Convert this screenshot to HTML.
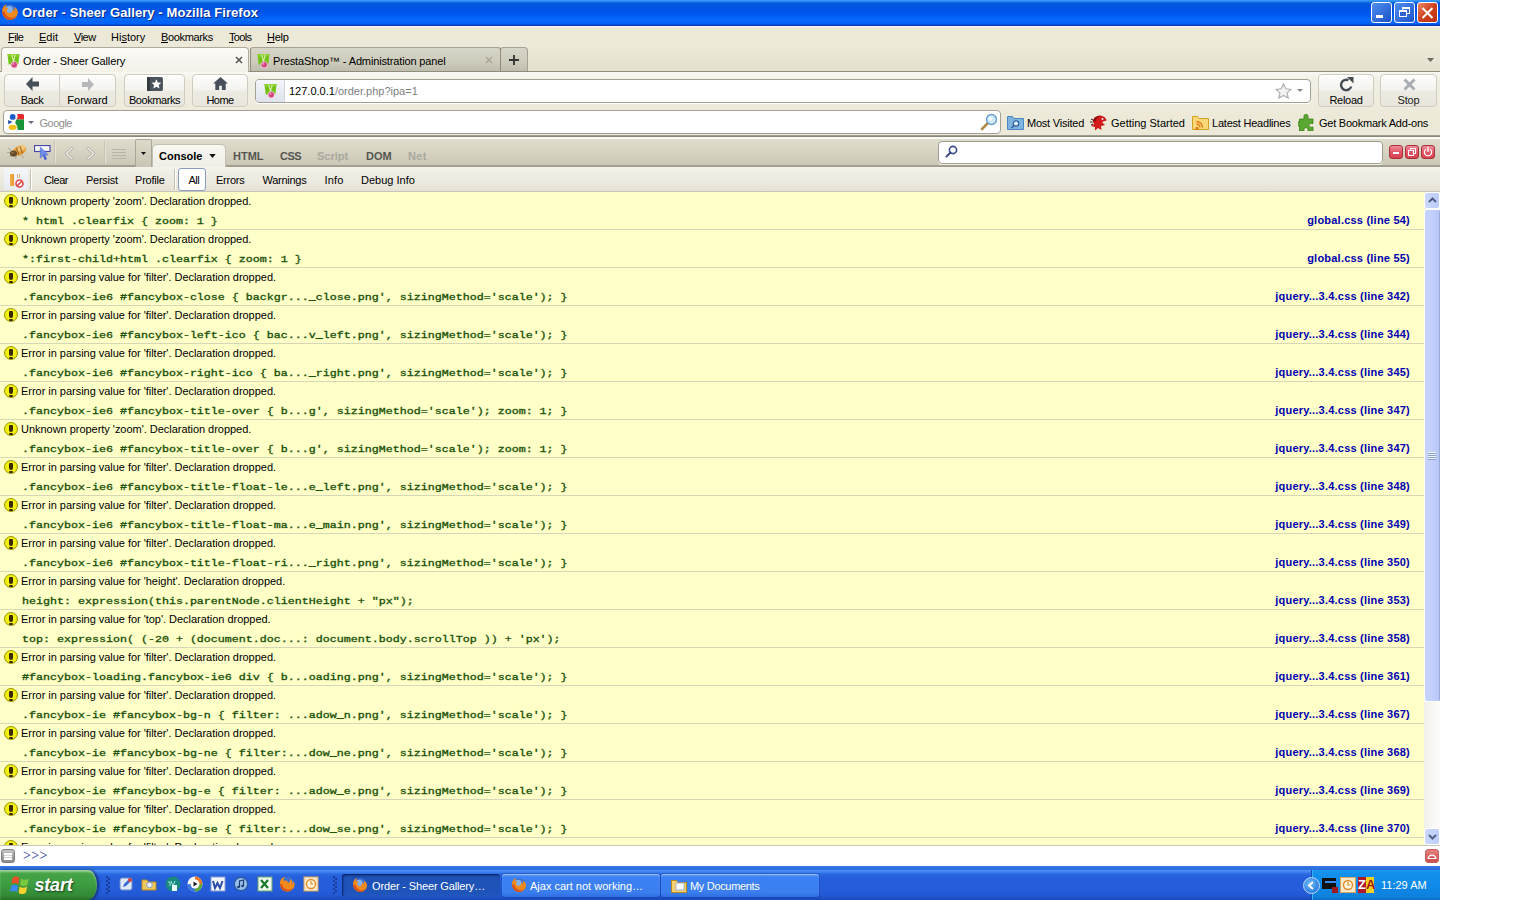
<!DOCTYPE html>
<html>
<head>
<meta charset="utf-8">
<title>Order - Sheer Gallery - Mozilla Firefox</title>
<style>
*{box-sizing:border-box;margin:0;padding:0}
html,body{width:1537px;height:900px;overflow:hidden;background:#fff}
body{font-family:"Liberation Sans",sans-serif;font-size:11px;color:#000;position:relative}
.abs{position:absolute}
#win{position:absolute;left:0;top:0;width:1440px;height:900px;background:#ECE9D8;overflow:hidden}
/* title bar */
#title{left:0;top:0;width:1440px;height:26px;background:linear-gradient(#3c9cfc 0,#2a86f2 1.500px,#0c66e2 2.500px,#0059de 4px,#0054e4 7px,#0055e8 12px,#0059f4 15px,#0468f8 19px,#0064fc 23px,#005cec 24.200px,#0042bc 25px,#002c98 26px)}
#title .txt{left:22px;top:5px;letter-spacing:.09px;font-weight:bold;font-size:13px;color:#fff;text-shadow:1px 1px 0 #0a2a80;white-space:nowrap}
.tb{top:2px;width:21px;height:21px;border:1px solid #fff;border-radius:3px;background:linear-gradient(135deg,#4f8ef0,#1c53c8)}
/* menu */
#menu{left:0;top:26px;width:1440px;height:22px;background:#ECE9D8;border-top:1px solid #f8f8fc}
#menu span{position:absolute;top:4px;font-size:11px;white-space:nowrap}
/* tabs */
#tabs{left:0;top:47px;width:1440px;height:25px;background:linear-gradient(#ECE9D8,#e4e0cf)}
/* nav */
#nav{left:0;top:72px;width:1440px;height:37px;background:linear-gradient(#f8f7f2,#f1efe4 8px,#eeebdd);border-top:1px solid #f8f7f2}
.nbtn{top:1px;height:33px;border:1px solid #d0cdbf;border-radius:4px;background:linear-gradient(#fdfdfc,#f4f3ee 48%,#eceae2 52%,#e8e6dc);box-shadow:0 1px 0 #fff inset}
.nbtn span{position:absolute;left:0;right:0;bottom:0;text-align:center;font-size:11px}
/* bookmarks/search row */
#bm{left:0;top:109px;width:1440px;height:26px;background:linear-gradient(#eeebdc,#ECE9D8 6px)}
/* firebug */
#fbtop{left:0;top:135px;width:1440px;height:32px;background:linear-gradient(#e0ddcd 4px,#cbc8b8 30px);border-bottom:2px solid #a29f8f}
#fbsub{left:0;top:167px;width:1440px;height:25px;background:linear-gradient(#f4f2ea,#e6e3d6);border-bottom:1px solid #c8c5b8}
.ft{top:15px;font-size:11px;font-weight:bold;color:#565650;white-space:nowrap}
.fw{top:10px;width:14px;height:14px;border-radius:3px;background:linear-gradient(#f08c9c,#e05868 50%,#d84050);border:1px solid #a83038}
.st{top:7px;font-size:11px;white-space:nowrap}
#log{left:0;top:192px;width:1424px;height:653px;background:#FFFFC8;overflow:hidden}
.row{position:absolute;left:0;width:1424px;height:38px;border-bottom:1px solid #d7d7b7}
.row .m{position:absolute;left:21px;top:3px;font-size:11px;white-space:nowrap;letter-spacing:-.03px}
.row .c{position:absolute;left:22px;top:24px;font-family:"Liberation Mono",monospace;font-size:11.667px;line-height:14px;font-weight:normal;-webkit-text-stroke:.4px #1c5208;color:#1c5208;white-space:pre;transform:scaleY(.8);transform-origin:0 0}
.row .l{position:absolute;right:14px;top:22px;font-weight:bold;font-size:11px;color:#0000b0;white-space:nowrap;letter-spacing:.22px}
.row .i{position:absolute;left:4px;top:2px;width:14px;height:14px;border-radius:7px;background:radial-gradient(circle at 50% 45%,#fbfb20,#f0ee10 60%,#e0d800);border:1px solid #9a9400}
.row .i:before{content:"";position:absolute;left:4px;top:2px;width:4px;height:7px;background:#3a2a00;border-radius:1px 1px 2px 2px}
.row .i:after{content:"";position:absolute;left:4px;top:9.500px;width:4px;height:2px;background:#3a2a00;border-radius:1px}
#cmd{left:0;top:845px;width:1440px;height:21px;background:#fff;border-top:1px solid #c8c5b8}
.tk{top:6px;width:158px;height:23px;border-radius:3px;background:linear-gradient(#5a98f8,#3c81f3 15%,#3a7ef0 80%,#2f6ee0);box-shadow:inset 0 1px 1px rgba(255,255,255,.4),0 0 0 1px rgba(10,40,140,.25)}
.tt{top:12px;font-size:11px;color:#fff;white-space:nowrap}
#task{left:0;top:866px;width:1440px;height:34px;background:linear-gradient(#3476e2 0,#2e6fde 3px,#2e6ee0 4px,#4a8ef4 4.500px,#3f84f0 6px,#2c68e2 8px,#265fdc 11px,#245cda 24px,#2259d4 29px,#1e50c6 32px,#1a46b4 34px)}
</style>
</head>
<body>
<div id="win">
<div id="title" class="abs">
<svg class="abs" style="left:1px;top:3px" width="18" height="18" viewBox="0 0 18 18"><circle cx="9" cy="9" r="7.5" fill="#3b6fd0"/><circle cx="8" cy="7" r="4" fill="#7fb2f0"/><path d="M1.2 8.5C1 4 4 1.5 6 1.2 4.6 2.6 4.5 4 5 5.2c1-.6 2-.4 2.6.2-1.6.6-2 1.8-1.6 3 .6 1.6 2.6 2 4 1.2 1.6-.9 2-2.6 1.4-4.2 1.2.8 1.8 2 1.8 3.400 .5-1.400 .5-3 0-4.500C16 5.500 17 7.500 16.800 10c-.4 4-3.800 6.800-7.800 6.800-4.300 0-7.600-3.600-7.800-8.300z" fill="#f08a1c"/><path d="M1.2 8.500C1.500 13 5 16.800 9 16.800c3 0 5.500-1.600 6.800-4-1.500 1.700-4 2.500-6.500 2-3.300-.6-5.300-3.300-5.600-6.300z" fill="#d8501a"/></svg>
<div class="abs txt">Order - Sheer Gallery - Mozilla Firefox</div>
<div class="abs tb" style="left:1371px"><i class="abs" style="left:4px;top:12px;width:7px;height:3px;background:#fff"></i></div>
<div class="abs tb" style="left:1394px"><i class="abs" style="left:7px;top:4px;width:8px;height:7px;border:1px solid #fff;border-top-width:2px"></i><i class="abs" style="left:4px;top:7px;width:8px;height:7px;border:1px solid #fff;border-top-width:2px;background:#2f62d0"></i></div>
<div class="abs tb" style="left:1417px;background:linear-gradient(135deg,#ec8a6a,#d1401c 50%,#b8300f)"><svg class="abs" style="left:3px;top:4px" width="13" height="12" viewBox="0 0 13 12"><path d="M1.500 1l10 10M11.500 1l-10 10" stroke="#fff" stroke-width="2"/></svg></div>
</div>
<div id="menu" class="abs"><span style="left:8px;letter-spacing:-.6px"><u>F</u>ile</span><span style="left:39px"><u>E</u>dit</span><span style="left:74px;letter-spacing:-.5px"><u>V</u>iew</span><span style="left:111px">Hi<u>s</u>tory</span><span style="left:161px;letter-spacing:-.35px"><u>B</u>ookmarks</span><span style="left:229px;letter-spacing:-.7px"><u>T</u>ools</span><span style="left:267px;letter-spacing:-.25px"><u>H</u>elp</span></div>
<div id="tabs" class="abs">
<div class="abs" style="left:0;top:24px;width:1440px;height:1px;background:#8f8c7c"></div>
<div class="abs" style="left:250px;top:0;width:251px;height:24px;border:1px solid #8f8c7c;border-top-color:#a5a294;border-bottom:0;border-radius:3px 3px 0 0;background:linear-gradient(#d6d5c7,#cccbbc 60%,#bfbeae)"></div>
<div class="abs" style="left:500px;top:0;width:28px;height:24px;border:1px solid #8f8c7c;border-top-color:#a5a294;border-right-color:#a5a294;border-bottom:0;border-radius:3px 4px 0 0;background:linear-gradient(#d6d5c7,#cccbbc 60%,#bfbeae)"></div>
<div class="abs" style="left:1px;top:0;width:248px;height:25px;border:1px solid #aeab9c;border-bottom:0;border-radius:4px 4px 0 0;background:linear-gradient(#fbfaf7,#f3f1e8)"></div>
<svg class="abs" style="left:7px;top:6px" width="13" height="16" viewBox="0 0 13 16"><path d="M.5 1h12l-1.200 10.500H1.700z" fill="#74c214"/><path d="M.5 1h12l-.3 2.500H.8z" fill="#8ad030"/><path d="M5 1.500c0 3 .8 4.500 1.500 6.500C7.200 6 8 4.500 8 1.500" fill="none" stroke="#d8f0b0" stroke-width="1.100"/><circle cx="7.200" cy="11.800" r="3.600" fill="#f4c8dc"/><circle cx="7.200" cy="11.800" r="2.700" fill="#d2447e"/><circle cx="6.400" cy="10.800" r="1" fill="#f0a8c8"/></svg>
<div class="abs" style="left:23px;top:8px;font-size:11px;white-space:nowrap;letter-spacing:-.15px">Order - Sheer Gallery</div>
<svg class="abs" style="left:235px;top:9px" width="8" height="8" viewBox="0 0 8 8"><path d="M1 1l6 6M7 1l-6 6" stroke="#5a5a55" stroke-width="1.600"/></svg>
<svg class="abs" style="left:257px;top:6px" width="13" height="16" viewBox="0 0 13 16"><path d="M.5 1h12l-1.200 10.500H1.700z" fill="#74c214"/><path d="M.5 1h12l-.3 2.500H.8z" fill="#8ad030"/><path d="M5 1.500c0 3 .8 4.500 1.500 6.500C7.200 6 8 4.500 8 1.500" fill="none" stroke="#d8f0b0" stroke-width="1.100"/><circle cx="7.200" cy="11.800" r="3.600" fill="#f4c8dc"/><circle cx="7.200" cy="11.800" r="2.700" fill="#d2447e"/><circle cx="6.400" cy="10.800" r="1" fill="#f0a8c8"/></svg>
<div class="abs" style="left:273px;top:8px;font-size:11px;white-space:nowrap;letter-spacing:-.14px">PrestaShop&trade; - Administration panel</div>
<svg class="abs" style="left:485px;top:9px" width="8" height="8" viewBox="0 0 8 8"><path d="M1 1l6 6M7 1l-6 6" stroke="#a9a698" stroke-width="1.600"/></svg>
<svg class="abs" style="left:509px;top:8px" width="10" height="10" viewBox="0 0 11 11"><path d="M5.500 0v11M0 5.500h11" stroke="#333" stroke-width="2"/></svg>
<svg class="abs" style="left:1427px;top:11px" width="7" height="4" viewBox="0 0 7 4"><path d="M0 0h7L3.500 4z" fill="#6a6a60"/></svg>
</div>
<div id="nav" class="abs">
<div class="abs nbtn" style="left:4px;width:56px;border-radius:4px 0 0 4px"><svg class="abs" style="left:21px;top:2px" width="13" height="14" viewBox="0 0 13 14"><path d="M6.500 0L0 7l6.500 7V9.500H13v-5H6.500z" fill="#47505a"/></svg><span style="letter-spacing:-.5px">Back</span></div>
<div class="abs nbtn" style="left:59px;width:57px;border-radius:0 4px 4px 0"><svg class="abs" style="left:22px;top:3px" width="12" height="13" viewBox="0 0 12 13"><path d="M6 0l6 6.500L6 13V9H0V4h6z" fill="#b6b8ba"/></svg><span>Forward</span></div>
<div class="abs nbtn" style="left:124px;width:61px"><svg class="abs" style="left:22px;top:2px" width="16" height="14" viewBox="0 0 17 15"><rect x="0" y="0" width="17" height="15" rx="2" fill="#4a525a"/><rect x="0" y="0" width="3" height="15" fill="#343a40"/><path d="M10 2.500l1.600 3.300 3.600.4-2.700 2.400.8 3.600L10 10.400 6.700 12.200l.8-3.600L4.800 6.200l3.600-.4z" fill="#fff"/></svg><span style="letter-spacing:-.44px">Bookmarks</span></div>
<div class="abs nbtn" style="left:192px;width:56px"><svg class="abs" style="left:20px;top:2px" width="15" height="13" viewBox="0 0 17 15"><path d="M8.500 0L0 7.500h2.500V15h4.500v-5h3v5h4.500V7.500H17z" fill="#47505a"/></svg><span style="letter-spacing:-.6px">Home</span></div>
<div class="abs" style="left:255px;top:6px;width:1056px;height:24px;border:1px solid #a3a195;border-radius:4px;background:#fff;box-shadow:0 1px 0 #fff"></div>
<div class="abs" style="left:256px;top:7px;width:29px;height:22px;border-radius:3px 0 0 3px;background:linear-gradient(#f4f6fa,#dde2ec);border-right:1px solid #d0d4dc"></div>
<svg class="abs" style="left:264px;top:10px" width="13" height="16" viewBox="0 0 13 16"><path d="M.5 1h12l-1.200 10.500H1.700z" fill="#74c214"/><path d="M.5 1h12l-.3 2.500H.8z" fill="#8ad030"/><path d="M5 1.500c0 3 .8 4.500 1.500 6.500C7.200 6 8 4.500 8 1.500" fill="none" stroke="#d8f0b0" stroke-width="1.100"/><circle cx="7.200" cy="11.800" r="3.600" fill="#f4c8dc"/><circle cx="7.200" cy="11.800" r="2.700" fill="#d2447e"/><circle cx="6.400" cy="10.800" r="1" fill="#f0a8c8"/></svg>
<div class="abs" style="left:289px;top:12px;font-size:11px;white-space:nowrap">127.0.0.1<span style="color:#808080">/order.php?ipa=1</span></div>
<svg class="abs" style="left:1275px;top:9.500px" width="17" height="16" viewBox="0 0 17 16"><path d="M8.500 1l2.300 4.800 5.200.6-3.900 3.500 1.100 5.100-4.700-2.600-4.700 2.600 1.100-5.100L1 6.400l5.200-.6z" fill="#f2f2f2" stroke="#b0b0b0" stroke-width="1.200"/></svg>
<svg class="abs" style="left:1297px;top:16px" width="6" height="3" viewBox="0 0 6 3"><path d="M0 0h6L3 3z" fill="#8a8a8a"/></svg>
<div class="abs nbtn" style="left:1318px;width:56px"><svg class="abs" style="left:20px;top:2px" width="15" height="15" viewBox="0 0 15 15"><path d="M12.200 9.500A5.200 5.200 0 1 1 9.500 3.200" fill="none" stroke="#454c54" stroke-width="2.400"/><path d="M8 0h6.500v6.500z" fill="#454c54"/></svg><span style="letter-spacing:-.3px">Reload</span></div>
<div class="abs nbtn" style="left:1380px;width:57px"><svg class="abs" style="left:22px;top:3px" width="13" height="13" viewBox="0 0 13 13"><path d="M1.500 1.500l10 10M11.500 1.500l-10 10" stroke="#a9acb0" stroke-width="3"/></svg><span style="color:#222;letter-spacing:-.2px">Stop</span></div>
</div>
<div id="bm" class="abs">
<div class="abs" style="left:3px;top:1px;width:998px;height:24px;border:1px solid #a3a195;border-radius:4px;background:#fff"></div>
<svg class="abs" style="left:8px;top:5px" width="16" height="16" viewBox="0 0 16 16"><path d="M9 0h5.500Q16 0 16 1.500V5.500H8.500Q10.500 2.500 9 0z" fill="#e8282a"/><path d="M8.500 5.500H16V16H9.500Q10 12 7.400 9.500Q7 7 8.500 5.500z" fill="#18953a"/><circle cx="4.700" cy="2.900" r="2.900" fill="#1c5acc"/><path d="M.2 6l4.200 2.100L.2 10.300z" fill="#1c4aa8"/><ellipse cx="4.700" cy="13.300" rx="4" ry="2.600" fill="#f0c018"/></svg>
<svg class="abs" style="left:28px;top:12px" width="6" height="3" viewBox="0 0 6 3"><path d="M0 0h6L3 3z" fill="#6a6880"/></svg>
<div class="abs" style="left:39.500px;top:8px;font-size:11px;color:#8e8e8e;letter-spacing:-.5px">Google</div>
<svg class="abs" style="left:980px;top:4px" width="18" height="18" viewBox="0 0 18 18"><path d="M2 16l6-6" stroke="#b08a4a" stroke-width="2.600" stroke-linecap="round"/><circle cx="11.500" cy="6.500" r="5" fill="#cfe8fa" stroke="#6a9ccc" stroke-width="1.400"/><circle cx="10.500" cy="5.500" r="2" fill="#f4fbff"/></svg>
<svg class="abs" style="left:1007px;top:6px" width="17" height="15" viewBox="0 0 17 15"><path d="M.5 1.500h5l1.500 2h9.500v11H.5z" fill="#7fb3e0" stroke="#4a86c0"/><circle cx="9" cy="8.500" r="2.700" fill="#e8f4ff" stroke="#2a5f9a" stroke-width="1.200"/><path d="M7 10.500l-2.500 2.500" stroke="#2a5f9a" stroke-width="1.500"/></svg>
<div class="abs" style="left:1027px;top:8px;font-size:11px;white-space:nowrap;letter-spacing:-.22px">Most Visited</div>
<svg class="abs" style="left:1090px;top:5px" width="17" height="17" viewBox="0 0 17 17"><path d="M3 8C3 3 8 1 12 2c3 .8 4.500 3 4.500 4.500L12 8l3 3-4 1 .5 4-3.500-2-3 2.500V13L1 12l3-2z" fill="#d41a1a"/><path d="M3 8C3 3 8 1 12 2c-3 0-6 2-6 5z" fill="#8a0c0c"/><circle cx="12.500" cy="5" r="1" fill="#fff"/><path d="M1 5l2 1M0 8h2.500M1 11l2-1" stroke="#222" stroke-width="1"/></svg>
<div class="abs" style="left:1111px;top:8px;font-size:11px;white-space:nowrap">Getting Started</div>
<svg class="abs" style="left:1192px;top:6px" width="17" height="15" viewBox="0 0 17 15"><path d="M.5 1.500h5l1.500 2h9.500v11H.5z" fill="#f8d878" stroke="#d4a020"/><path d="M5 12.500a1 1 0 1 0 .01 0M4.500 9a3.500 3.500 0 0 1 3.500 3.500M4.500 6.500a6 6 0 0 1 6 6" fill="none" stroke="#e07818" stroke-width="1.300"/></svg>
<div class="abs" style="left:1212px;top:8px;font-size:11px;white-space:nowrap;letter-spacing:-.22px">Latest Headlines</div>
<svg class="abs" style="left:1298px;top:4px" width="17" height="18" viewBox="0 0 17 18"><path d="M6 4.500a2.200 2.200 0 1 1 4 0V6h5v4.500h-1a2 2 0 1 0 0 3.500h1V18H10v-1.500a2 2 0 1 0-4 0V18H1.500v-5H0a2.200 2.200 0 1 1 1.500-3.500V6H6z" fill="#5aa832" stroke="#3a8018" stroke-width=".8"/></svg>
<div class="abs" style="left:1319px;top:8px;font-size:11px;white-space:nowrap;letter-spacing:-.23px">Get Bookmark Add-ons</div>
</div>
<div id="fbtop" class="abs">
<div class="abs" style="left:0;top:0;width:1440px;height:1px;background:#a09e8e"></div><div class="abs" style="left:0;top:1px;width:1440px;height:1px;background:#8a8878"></div><div class="abs" style="left:0;top:2px;width:1440px;height:2px;background:#fbfaf6"></div>
<svg class="abs" style="left:7px;top:8px;opacity:.9" width="21" height="18" viewBox="0 0 21 18"><path d="M1 5l6 4M2 14l6-4M19 5l-5 3M17 15l-4-4M0 9.500h5M8 16l2-4" stroke="#9a8a6a" stroke-width=".9" opacity=".7"/><ellipse cx="12.500" cy="7.500" rx="7" ry="4.600" fill="#ee9a2a" transform="rotate(-24 12.500 7.500)"/><ellipse cx="14" cy="5.500" rx="4.500" ry="2.400" fill="#f8c870" transform="rotate(-24 14 5.500)"/><path d="M9.500 5l2.500 7M13 3.500l2.500 7" stroke="#8a5218" stroke-width="1.300" opacity=".8"/><ellipse cx="6.500" cy="10.500" rx="3.600" ry="3.100" fill="#5a3c1c"/><ellipse cx="5.500" cy="9.500" rx="1.500" ry="1" fill="#8a6840"/></svg>
<svg class="abs" style="left:34px;top:10px" width="17" height="16" viewBox="0 0 17 16"><rect x=".5" y=".5" width="15.500" height="6" fill="#f4f4fc" stroke="#4a4aa4" stroke-width="1.200"/><path d="M6.300 2v11.200l2.600-2.600 2 4.200 1.800-.9-2-4h3.600z" fill="#6f8eea" stroke="#4a5cc8" stroke-width=".5"/><path d="M9 9l1.900 5.800 1.800-.9-2-4z" fill="#4a58d4"/></svg>
<div class="abs" style="left:54px;top:6px;width:1px;height:22px;background:#c6c3b3"></div><div class="abs" style="left:55px;top:6px;width:1px;height:22px;background:#e6e3d6"></div>
<svg class="abs" style="left:63px;top:11px" width="11" height="15" viewBox="0 0 11 15"><path d="M8.500 1L2 7.500 8.500 14l1.500-1.500-5-5 5-5z" fill="#f4f3ee" stroke="#a8a598" stroke-width="1"/></svg>
<svg class="abs" style="left:86px;top:11px" width="11" height="15" viewBox="0 0 11 15"><path d="M2.500 1L9 7.500 2.500 14 1 12.500l5-5-5-5z" fill="#f4f3ee" stroke="#a8a598" stroke-width="1"/></svg>
<div class="abs" style="left:104px;top:6px;width:1px;height:22px;background:#c6c3b3"></div><div class="abs" style="left:105px;top:6px;width:1px;height:22px;background:#e6e3d6"></div>
<svg class="abs" style="left:112px;top:13px" width="14" height="12" viewBox="0 0 14 12"><path d="M0 1.500h14M0 4.500h14M0 7.500h14M0 10.500h14" stroke="#b8b5a8" stroke-width="1"/></svg>
<div class="abs" style="left:135px;top:4px;width:17px;height:28px;border:1px solid #a9a698;border-bottom:0;border-radius:2px 2px 0 0;background:linear-gradient(#dedac9,#c9c5b4)"></div>
<svg class="abs" style="left:141px;top:17px" width="5" height="3" viewBox="0 0 5 3"><path d="M0 0h5L2.500 3z" fill="#111"/></svg>
<div class="abs" style="left:152px;top:9px;width:74px;height:24px;border:1px solid #c4c1b3;border-bottom:0;border-radius:5px 5px 0 0;background:linear-gradient(#f8f7f2,#efede4)"></div>
<div class="abs" style="left:159px;top:15px;font-size:11px;font-weight:bold;white-space:nowrap">Console</div>
<svg class="abs" style="left:209px;top:19px" width="7" height="4" viewBox="0 0 8 5"><path d="M0 0h8L4 5z" fill="#111"/></svg>
<div class="abs ft" style="left:233px">HTML</div>
<div class="abs ft" style="left:280px;letter-spacing:-.5px">CSS</div>
<div class="abs ft" style="left:317px;color:#aaa89c">Script</div>
<div class="abs ft" style="left:366px">DOM</div>
<div class="abs ft" style="left:408px;color:#aaa89c;letter-spacing:.3px">Net</div>
<div class="abs" style="left:938px;top:6px;width:445px;height:23px;border:1px solid #a09d90;border-radius:4px;background:#fff;box-shadow:0 1px 0 #f4f2ea"></div>
<svg class="abs" style="left:945px;top:10px" width="13" height="13" viewBox="0 0 13 13"><circle cx="8" cy="5" r="3.600" fill="#fff" stroke="#3a4a8a" stroke-width="1.600"/><path d="M5.500 7.500L1.500 11.500" stroke="#3a4a8a" stroke-width="2" stroke-linecap="round"/></svg>
<div class="abs fw" style="left:1389px"><i class="abs" style="left:3px;top:6px;width:6px;height:2px;background:#fff"></i></div>
<div class="abs fw" style="left:1405px"><i class="abs" style="left:4px;top:2px;width:6px;height:6px;border:1px solid #fff"></i><i class="abs" style="left:2px;top:4px;width:6px;height:6px;border:1px solid #fff;background:#d85868"></i></div>
<div class="abs fw" style="left:1421px"><svg class="abs" style="left:1px;top:1px" width="10" height="10" viewBox="0 0 10 10"><path d="M3 2.200A3.600 3.600 0 1 0 7 2.200" fill="none" stroke="#fff" stroke-width="1.300"/><path d="M5 0v5" stroke="#fff" stroke-width="1.300"/></svg></div>
</div>
<div id="fbsub" class="abs">
<div class="abs" style="left:4px;top:1px;width:24px;height:22px;background:linear-gradient(#f4f7fb,#e8edf4);border-radius:3px"></div>
<div class="abs" style="left:10px;top:7px;width:4px;height:12px;background:linear-gradient(90deg,#f0b050,#e89a2c)"></div>
<div class="abs" style="left:17px;top:7px;width:1px;height:4px;background:#d8b070"></div><div class="abs" style="left:19px;top:7px;width:1px;height:4px;background:#d8b070"></div>
<svg class="abs" style="left:15px;top:12px" width="9" height="9" viewBox="0 0 9 9"><circle cx="4.500" cy="4.500" r="3.500" fill="#fff" stroke="#e04848" stroke-width="1.600"/><path d="M2 7L7 2" stroke="#e04848" stroke-width="1.600"/></svg>
<div class="abs" style="left:30px;top:2px;width:1px;height:21px;background:#c4c1b3"></div><div class="abs" style="left:31px;top:2px;width:1px;height:21px;background:#fff"></div>
<div class="abs st" style="left:44px;letter-spacing:-.46px">Clear</div><div class="abs st" style="left:86px;letter-spacing:-.27px">Persist</div><div class="abs st" style="left:135px;letter-spacing:-.2px">Profile</div>
<div class="abs" style="left:174px;top:2px;width:1px;height:21px;background:#c4c1b3"></div><div class="abs" style="left:175px;top:2px;width:1px;height:21px;background:#fff"></div>
<div class="abs" style="left:178px;top:1px;width:28px;height:23px;border:1px solid #8a9cc0;border-radius:3px;background:#fff"></div>
<div class="abs st" style="left:188.500px;letter-spacing:-.5px">All</div><div class="abs st" style="left:216px;letter-spacing:-.25px">Errors</div><div class="abs st" style="left:262.500px;letter-spacing:-.26px">Warnings</div><div class="abs st" style="left:324.500px;letter-spacing:.15px">Info</div><div class="abs st" style="left:361px">Debug Info</div>
</div>
<div id="log" class="abs">
<div class="row" style="top:0px"><div class="i"></div><div class="m">Unknown property 'zoom'. Declaration dropped.</div><div class="c">* html .clearfix { zoom: 1 }</div><div class="l">global.css (line 54)</div></div>
<div class="row" style="top:38px"><div class="i"></div><div class="m">Unknown property 'zoom'. Declaration dropped.</div><div class="c">*:first-child+html .clearfix { zoom: 1 }</div><div class="l">global.css (line 55)</div></div>
<div class="row" style="top:76px"><div class="i"></div><div class="m">Error in parsing value for 'filter'. Declaration dropped.</div><div class="c">.fancybox-ie6 #fancybox-close { backgr..._close.png', sizingMethod='scale'); }</div><div class="l">jquery...3.4.css (line 342)</div></div>
<div class="row" style="top:114px"><div class="i"></div><div class="m">Error in parsing value for 'filter'. Declaration dropped.</div><div class="c">.fancybox-ie6 #fancybox-left-ico { bac...v_left.png', sizingMethod='scale'); }</div><div class="l">jquery...3.4.css (line 344)</div></div>
<div class="row" style="top:152px"><div class="i"></div><div class="m">Error in parsing value for 'filter'. Declaration dropped.</div><div class="c">.fancybox-ie6 #fancybox-right-ico { ba..._right.png', sizingMethod='scale'); }</div><div class="l">jquery...3.4.css (line 345)</div></div>
<div class="row" style="top:190px"><div class="i"></div><div class="m">Error in parsing value for 'filter'. Declaration dropped.</div><div class="c">.fancybox-ie6 #fancybox-title-over { b...g', sizingMethod='scale'); zoom: 1; }</div><div class="l">jquery...3.4.css (line 347)</div></div>
<div class="row" style="top:228px"><div class="i"></div><div class="m">Unknown property 'zoom'. Declaration dropped.</div><div class="c">.fancybox-ie6 #fancybox-title-over { b...g', sizingMethod='scale'); zoom: 1; }</div><div class="l">jquery...3.4.css (line 347)</div></div>
<div class="row" style="top:266px"><div class="i"></div><div class="m">Error in parsing value for 'filter'. Declaration dropped.</div><div class="c">.fancybox-ie6 #fancybox-title-float-le...e_left.png', sizingMethod='scale'); }</div><div class="l">jquery...3.4.css (line 348)</div></div>
<div class="row" style="top:304px"><div class="i"></div><div class="m">Error in parsing value for 'filter'. Declaration dropped.</div><div class="c">.fancybox-ie6 #fancybox-title-float-ma...e_main.png', sizingMethod='scale'); }</div><div class="l">jquery...3.4.css (line 349)</div></div>
<div class="row" style="top:342px"><div class="i"></div><div class="m">Error in parsing value for 'filter'. Declaration dropped.</div><div class="c">.fancybox-ie6 #fancybox-title-float-ri..._right.png', sizingMethod='scale'); }</div><div class="l">jquery...3.4.css (line 350)</div></div>
<div class="row" style="top:380px"><div class="i"></div><div class="m">Error in parsing value for 'height'. Declaration dropped.</div><div class="c">height: expression(this.parentNode.clientHeight + "px");</div><div class="l">jquery...3.4.css (line 353)</div></div>
<div class="row" style="top:418px"><div class="i"></div><div class="m">Error in parsing value for 'top'. Declaration dropped.</div><div class="c">top: expression( (-20 + (document.doc...: document.body.scrollTop )) + 'px');</div><div class="l">jquery...3.4.css (line 358)</div></div>
<div class="row" style="top:456px"><div class="i"></div><div class="m">Error in parsing value for 'filter'. Declaration dropped.</div><div class="c">#fancybox-loading.fancybox-ie6 div { b...oading.png', sizingMethod='scale'); }</div><div class="l">jquery...3.4.css (line 361)</div></div>
<div class="row" style="top:494px"><div class="i"></div><div class="m">Error in parsing value for 'filter'. Declaration dropped.</div><div class="c">.fancybox-ie #fancybox-bg-n { filter: ...adow_n.png', sizingMethod='scale'); }</div><div class="l">jquery...3.4.css (line 367)</div></div>
<div class="row" style="top:532px"><div class="i"></div><div class="m">Error in parsing value for 'filter'. Declaration dropped.</div><div class="c">.fancybox-ie #fancybox-bg-ne { filter:...dow_ne.png', sizingMethod='scale'); }</div><div class="l">jquery...3.4.css (line 368)</div></div>
<div class="row" style="top:570px"><div class="i"></div><div class="m">Error in parsing value for 'filter'. Declaration dropped.</div><div class="c">.fancybox-ie #fancybox-bg-e { filter: ...adow_e.png', sizingMethod='scale'); }</div><div class="l">jquery...3.4.css (line 369)</div></div>
<div class="row" style="top:608px"><div class="i"></div><div class="m">Error in parsing value for 'filter'. Declaration dropped.</div><div class="c">.fancybox-ie #fancybox-bg-se { filter:...dow_se.png', sizingMethod='scale'); }</div><div class="l">jquery...3.4.css (line 370)</div></div>
<div class="row" style="top:646px"><div class="i"></div><div class="m">Error in parsing value for 'filter'. Declaration dropped.</div><div class="c"></div><div class="l"></div></div>
</div>
<div class="abs" id="sb" style="left:1424px;top:192px;width:16px;height:653px;background:linear-gradient(90deg,#f1f0ea,#fdfdfb)">
<div class="abs" style="left:0;top:0;width:16px;height:17px;border:1px solid #fff;border-radius:3px;background:linear-gradient(90deg,#cdd9fc,#bccbf9)"><svg class="abs" style="left:2.500px;top:4px" width="9" height="6" viewBox="0 0 9 6"><path d="M1 5l3.500-3.500L8 5" stroke="#4d6185" stroke-width="2" fill="none"/></svg></div>
<div class="abs" style="left:0;top:17px;width:16px;height:493px;border:1px solid #fff;border-right-color:#9cabd4;border-radius:3px;background:linear-gradient(90deg,#c8d4fc,#c2d0fb 50%,#b6c6f8)"><i class="abs" style="left:3px;top:242px;width:8px;height:1px;background:#eef4fe;box-shadow:0 1px 0 #8c9fd0,0 2px 0 #eef4fe,0 3px 0 #8c9fd0,0 4px 0 #eef4fe,0 5px 0 #8c9fd0,0 6px 0 #eef4fe,0 7px 0 #8c9fd0"></i></div>
<div class="abs" style="left:0;top:636px;width:16px;height:17px;border:1px solid #fff;border-radius:3px;background:linear-gradient(90deg,#cdd9fc,#bccbf9)"><svg class="abs" style="left:2.500px;top:5px" width="9" height="6" viewBox="0 0 9 6"><path d="M1 1l3.500 3.500L8 1" stroke="#4d6185" stroke-width="2" fill="none"/></svg></div>
</div>
<div id="cmd" class="abs">
<div class="abs" style="left:1px;top:3px;width:14px;height:14px;border:1px solid #7c7c7c;border-radius:3px;background:linear-gradient(#c8c8c8,#a4a4a4 50%,#8e8e8e)"><i class="abs" style="left:2px;top:3px;width:8px;height:1.500px;background:#fff;box-shadow:0 2.500px 0 #fff,0 5px 0 #fff"></i></div>
<div class="abs" style="left:23px;top:2px;font-family:'Liberation Serif',serif;font-size:14px;color:#1616a0;letter-spacing:.3px">&gt;&gt;&gt;</div>
<div class="abs" style="left:1425px;top:3px;width:14px;height:14px;border-radius:3px;background:linear-gradient(#e48080,#cc4c4c);border:1px solid #c46060"><svg class="abs" style="left:1px;top:3px" width="10" height="6" viewBox="0 0 10 6"><path d="M1 5.500C2 1 8 1 9 5.500z" fill="none" stroke="#fff" stroke-width="1.200"/></svg></div>
</div>
<div id="task" class="abs"><div class="abs" style="left:0;top:2px;width:1440px;height:32px">
<div class="abs" style="left:0;top:2px;width:97px;height:30px;border-radius:0 9px 9px 0/0 15px 15px 0;background:linear-gradient(#6cba66 0,#46a446 12%,#3c9c40 50%,#338a36 85%,#287028 100%);box-shadow:2px 0 3px rgba(0,0,30,.5),inset 0 2px 2px rgba(255,255,255,.35)"></div>
<svg class="abs" style="left:10px;top:7px" width="20" height="19" viewBox="0 0 17 16.500"><path d="M2 2.500c2-1.500 4-1.500 6 0L7 8C5 6.500 3 6.500 1 8z" fill="#e8502a"/><path d="M9.500 3c2 1.500 4 1.500 6.500 0L15 8.500c-2.500 1.500-4.500 1.500-6.500 0z" fill="#7ac840"/><path d="M.8 9.500c2-1.500 4-1.500 6 0L5.800 15c-2-1.500-4-1.500-6 0z" fill="#3a8af0"/><path d="M8.200 10c2 1.500 4 1.500 6.500 0L13.700 15.500c-2.500 1.500-4.500 1.500-6.500 0z" fill="#f8d030"/></svg>
<div class="abs" style="left:34.500px;top:6.500px;font-size:18px;font-weight:bold;font-style:italic;color:#fff;text-shadow:1px 1px 2px #1a401a;letter-spacing:-.2px">start</div>
<div class="abs" style="left:106px;top:8px;width:2px;height:2px;background:#1a3c9a;box-shadow:0 4px 0 #1a3c9a,0 8px 0 #1a3c9a,0 12px 0 #1a3c9a,0 16px 0 #1a3c9a,2px 2px 0 #1a3c9a,2px 6px 0 #1a3c9a,2px 10px 0 #1a3c9a,2px 14px 0 #1a3c9a"></div><svg class="abs" style="left:118px;top:8px" width="16" height="16" viewBox="0 0 16 16"><rect x="2" y="2" width="12" height="12" rx="2" fill="#dfeaf8" stroke="#6a8ac8"/><path d="M5 11l1-3 4-4 2 2-4 4z" fill="#3a6ad0"/><circle cx="12" cy="4" r="2" fill="#d04040"/></svg><svg class="abs" style="left:141px;top:8px" width="16" height="16" viewBox="0 0 16 16"><path d="M1 4h5l1.500 2H15v8H1z" fill="#f0c860" stroke="#b88a20"/><circle cx="8.500" cy="9" r="2.800" fill="#e8f0f8" stroke="#8aa0c0"/></svg><svg class="abs" style="left:165px;top:8px" width="16" height="16" viewBox="0 0 16 16"><circle cx="8" cy="8" r="7.500" fill="#1a8a80"/><path d="M3 6h2v4M6 5l2 5 2-5" stroke="#9fe8d8" fill="none" stroke-width="1"/><rect x="7" y="9" width="5" height="6" fill="#e8fff8"/></svg><svg class="abs" style="left:187px;top:8px" width="16" height="16" viewBox="0 0 16 16"><circle cx="8" cy="8" r="7.500" fill="#f4f4f4"/><path d="M8 .5a7.500 7.500 0 0 1 7.500 7.500H8z" fill="#e87828"/><path d="M15.500 8A7.500 7.500 0 0 1 8 15.500V8z" fill="#5aa838"/><path d="M8 15.500A7.500 7.500 0 0 1 .5 8H8z" fill="#3a78d8"/><circle cx="8" cy="8" r="4.500" fill="#fff"/><path d="M6.500 5.500l4 2.500-4 2.500z" fill="#222"/></svg><svg class="abs" style="left:210px;top:8px" width="16" height="16" viewBox="0 0 16 16"><rect x="1" y="1" width="14" height="14" fill="#f4f6fc" stroke="#8aa0d0"/><path d="M3 5l2 7 2.500-5 2.500 5 2.500-7" stroke="#2a4aa8" stroke-width="2" fill="none"/></svg><svg class="abs" style="left:233px;top:8px" width="16" height="16" viewBox="0 0 16 16"><circle cx="8" cy="8" r="7.500" fill="#2a5aa8"/><circle cx="8" cy="8" r="6" fill="#9ac0e8"/><path d="M6.500 11V5l4-1v6" stroke="#1a3a78" stroke-width="1.200" fill="none"/><circle cx="5.500" cy="11" r="1.300" fill="#1a3a78"/><circle cx="9.500" cy="10" r="1.300" fill="#1a3a78"/></svg><svg class="abs" style="left:257px;top:8px" width="16" height="16" viewBox="0 0 16 16"><rect x="1" y="1" width="14" height="14" fill="#eef8ee" stroke="#6aa86a"/><path d="M4 4l7 8M11 4l-7 8" stroke="#1a7a2a" stroke-width="2.200"/></svg><svg class="abs" style="left:279px;top:8px" width="16" height="16" viewBox="0 0 16 16"><circle cx="8" cy="8" r="7.500" fill="#3b6fd0"/><path d="M1 7C1 3 4 1 6 1 4.500 2.500 4.500 4 5 5c2-1 4 0 4 2 1.500-.5 2.500-2 2-4 2 1 3 3 2.500 5.500 1-1 1-2.500.5-4C15.500 6 16 8 15.500 10c-1 3.500-4 5.500-7.500 5.500C4 15.500 1 12 1 7z" fill="#f08a1c"/><path d="M1 8c.5 4.500 3.500 7.500 7 7.500 2.500 0 5-1.500 6-3.500-4 3-10 2-11-4z" fill="#d8501a"/></svg><svg class="abs" style="left:303px;top:8px" width="16" height="16" viewBox="0 0 16 16"><rect x="1" y="1" width="14" height="14" fill="#fbe8c8" stroke="#d8a860"/><circle cx="8" cy="8" r="4.500" fill="#fff6e0" stroke="#e08a28" stroke-width="1.300"/><path d="M8 5v3h2.500" stroke="#e08a28" stroke-width="1.200" fill="none"/></svg><div class="abs" style="left:333px;top:8px;width:2px;height:2px;background:#1a3c9a;box-shadow:0 4px 0 #1a3c9a,0 8px 0 #1a3c9a,0 12px 0 #1a3c9a,0 16px 0 #1a3c9a,2px 2px 0 #1a3c9a,2px 6px 0 #1a3c9a,2px 10px 0 #1a3c9a,2px 14px 0 #1a3c9a"></div>
<div class="abs tk" style="left:342px;background:linear-gradient(#1a48a8,#1e52b7 20%,#1f54ba 85%,#2259c4);box-shadow:inset 1px 1px 2px rgba(0,0,40,.6)"></div>
<svg class="abs" style="left:352px;top:9px" width="16" height="16" viewBox="0 0 18 18"><circle cx="9" cy="9" r="7.500" fill="#3b6fd0"/><circle cx="8" cy="7" r="4" fill="#7fb2f0"/><path d="M1.200 8.500C1 4 4 1.500 6 1.200 4.600 2.600 4.500 4 5 5.200c1-.6 2-.4 2.600.2-1.600.6-2 1.800-1.600 3 .6 1.600 2.600 2 4 1.200 1.600-.9 2-2.600 1.400-4.200 1.200.8 1.800 2 1.800 3.400.5-1.400.5-3 0-4.500C16 5.500 17 7.500 16.800 10c-.4 4-3.800 6.800-7.800 6.800-4.300 0-7.600-3.600-7.800-8.300z" fill="#f08a1c"/><path d="M1.200 8.500C1.500 13 5 16.800 9 16.800c3 0 5.500-1.600 6.800-4-1.500 1.700-4 2.500-6.500 2-3.300-.6-5.300-3.300-5.600-6.300z" fill="#d8501a"/></svg>
<div class="abs tt" style="left:372px;letter-spacing:-.14px">Order - Sheer Gallery&hellip;</div>
<div class="abs tk" style="left:502px"></div>
<svg class="abs" style="left:511px;top:9px" width="16" height="16" viewBox="0 0 18 18"><circle cx="9" cy="9" r="7.500" fill="#3b6fd0"/><circle cx="8" cy="7" r="4" fill="#7fb2f0"/><path d="M1.200 8.500C1 4 4 1.500 6 1.200 4.600 2.600 4.500 4 5 5.200c1-.6 2-.4 2.600.2-1.600.6-2 1.800-1.600 3 .6 1.600 2.600 2 4 1.200 1.600-.9 2-2.600 1.400-4.200 1.200.8 1.800 2 1.800 3.400.5-1.400.5-3 0-4.500C16 5.500 17 7.500 16.800 10c-.4 4-3.800 6.800-7.800 6.800-4.300 0-7.600-3.600-7.800-8.300z" fill="#f08a1c"/><path d="M1.200 8.500C1.500 13 5 16.800 9 16.800c3 0 5.500-1.600 6.800-4-1.500 1.700-4 2.500-6.500 2-3.300-.6-5.300-3.300-5.600-6.300z" fill="#d8501a"/></svg>
<div class="abs tt" style="left:530px">Ajax cart not working&hellip;</div>
<div class="abs tk" style="left:661px"></div>
<svg class="abs" style="left:671px;top:10px" width="16" height="15" viewBox="0 0 16 15"><path d="M.5 2.500h5l1.500 2h8.500v10H.5z" fill="#f4d070" stroke="#b88a20"/><rect x="5" y="5" width="8" height="7" fill="#f8f8ff" stroke="#98a8c8" stroke-width=".8"/></svg>
<div class="abs tt" style="left:690px;letter-spacing:-.32px">My Documents</div>
<div class="abs" style="left:1311px;top:2px;width:129px;height:30px;background:linear-gradient(#1a9af0 0,#1290ec 10%,#0f8aea 50%,#0e80dc 90%,#0a6cc0 100%);border-left:1px solid #0a50b0;box-shadow:inset 1px 0 0 #40b0f8"></div>
<div class="abs" style="left:1303px;top:9px;width:17px;height:17px;border-radius:9px;background:radial-gradient(circle at 40% 35%,#6ab8f8,#1a6ad8);border:1px solid #bcd8f8"><svg class="abs" style="left:3px;top:3px" width="8" height="9" viewBox="0 0 8 9"><path d="M6 1L2 4.500 6 8" stroke="#fff" stroke-width="2" fill="none"/></svg></div>
<div class="abs" style="left:1322px;top:10px;width:14px;height:11px;background:#111"><i class="abs" style="left:3px;top:3px;width:11px;height:2px;background:#3a8af0"></i></div><div class="abs" style="left:1332px;top:19px;width:6px;height:6px;background:#a01818"></div>
<div class="abs" style="left:1340px;top:9px;width:16px;height:16px;background:#fbe8c8;border:1px solid #d8a860"><svg class="abs" style="left:1px;top:1px" width="12" height="12" viewBox="0 0 12 12"><circle cx="6" cy="6" r="4.500" fill="#fff6e0" stroke="#e08a28" stroke-width="1.300"/><path d="M6 3v3h2.500" stroke="#e08a28" stroke-width="1.200" fill="none"/></svg></div>
<div class="abs" style="left:1358px;top:9px;width:8px;height:16px;background:#b01828;color:#fff;font-weight:bold;font-size:13px;line-height:16px;text-align:center">Z</div><div class="abs" style="left:1366px;top:9px;width:8px;height:16px;background:#f4d020;color:#a01818;font-weight:bold;font-size:13px;line-height:16px;text-align:center">A</div>
<div class="abs" style="left:1381px;top:11px;font-size:11px;color:#fff;white-space:nowrap">11:29 AM</div>
</div></div>
</div>
</body>
</html>
